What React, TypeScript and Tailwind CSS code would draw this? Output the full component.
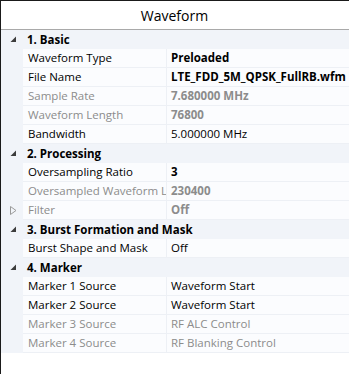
type Prop = {
  label: string;
  value: string;
  bold?: boolean;
  dim?: boolean;
  collapsed?: boolean;
};

type Group = {
  title: string;
  props: Prop[];
};

const groups: Group[] = [
  {
    title: '1. Basic',
    props: [
      { label: 'Waveform Type', value: 'Preloaded', bold: true },
      { label: 'File Name', value: 'LTE_FDD_5M_QPSK_FullRB.wfm', bold: true },
      { label: 'Sample Rate', value: '7.680000 MHz', bold: true, dim: true },
      { label: 'Waveform Length', value: '76800', bold: true, dim: true },
      { label: 'Bandwidth', value: '5.000000 MHz' },
    ],
  },
  {
    title: '2. Processing',
    props: [
      { label: 'Oversampling Ratio', value: '3', bold: true },
      { label: 'Oversampled Waveform Length', value: '230400', bold: true, dim: true },
      { label: 'Filter', value: 'Off', bold: true, dim: true, collapsed: true },
    ],
  },
  {
    title: '3. Burst Formation and Mask',
    props: [{ label: 'Burst Shape and Mask', value: 'Off' }],
  },
  {
    title: '4. Marker',
    props: [
      { label: 'Marker 1 Source', value: 'Waveform Start' },
      { label: 'Marker 2 Source', value: 'Waveform Start' },
      { label: 'Marker 3 Source', value: 'RF ALC Control', dim: true },
      { label: 'Marker 4 Source', value: 'RF Blanking Control', dim: true },
    ],
  },
];

function ExpandedArrow() {
  return (
    <svg width="7" height="7" viewBox="0 0 7 7">
      <polygon points="6,0.5 6,6 0.5,6" fill="#3c3c3c" />
    </svg>
  );
}

function CollapsedArrow() {
  return (
    <svg width="7" height="9" viewBox="0 0 7 9">
      <polygon points="0.5,0.5 6,4.5 0.5,8.5" fill="none" stroke="#9a9a9a" strokeWidth="1" />
    </svg>
  );
}

export default function App() {
  return (
    <div
      className="w-[349px] h-[374px] bg-white border-l border-t border-[#1a1a1a] overflow-hidden text-[11.5px] text-black"
      style={{ fontFamily: '"Open Sans", "Noto Sans", sans-serif' }}
    >
      {/* Title */}
      <div className="h-[29px] flex items-center justify-center border-b border-[#a9a9a9] text-[14px] pr-[1px]">
        Waveform
      </div>

      {/* Property grid */}
      <div className="flex flex-col">
        {groups.map((g) => (
          <div key={g.title} className="flex flex-col">
            <div className="h-[19px] flex items-center bg-[#f1f4f9]">
              <div className="w-[22px] shrink-0 flex justify-center pl-[2px]">
                <ExpandedArrow />
              </div>
              <span className="font-bold pl-[4px] whitespace-nowrap">{g.title}</span>
            </div>
            {g.props.map((p) => (
              <div key={p.label} className="h-[19px] flex bg-[#f1f4f9]">
                <div className="w-[22px] shrink-0 flex items-center justify-center pl-[2px]">
                  {p.collapsed && <CollapsedArrow />}
                </div>
                <div className="flex-1 min-w-0 flex bg-[#fbfcfe] border-b border-[#edf0f5]">
                  <div
                    className={`w-[144px] shrink-0 pl-[5px] flex items-center whitespace-nowrap overflow-hidden border-r border-[#edf0f5] ${
                      p.dim ? 'text-[#8c8c8c]' : 'text-black'
                    }`}
                  >
                    {p.label}
                  </div>
                  <div
                    className={`flex-1 min-w-0 pl-[4px] flex items-center whitespace-nowrap overflow-hidden ${
                      p.bold ? 'font-bold' : ''
                    } ${p.dim ? 'text-[#8c8c8c]' : 'text-black'}`}
                  >
                    {p.value}
                  </div>
                </div>
              </div>
            ))}
          </div>
        ))}
      </div>
    </div>
  );
}
